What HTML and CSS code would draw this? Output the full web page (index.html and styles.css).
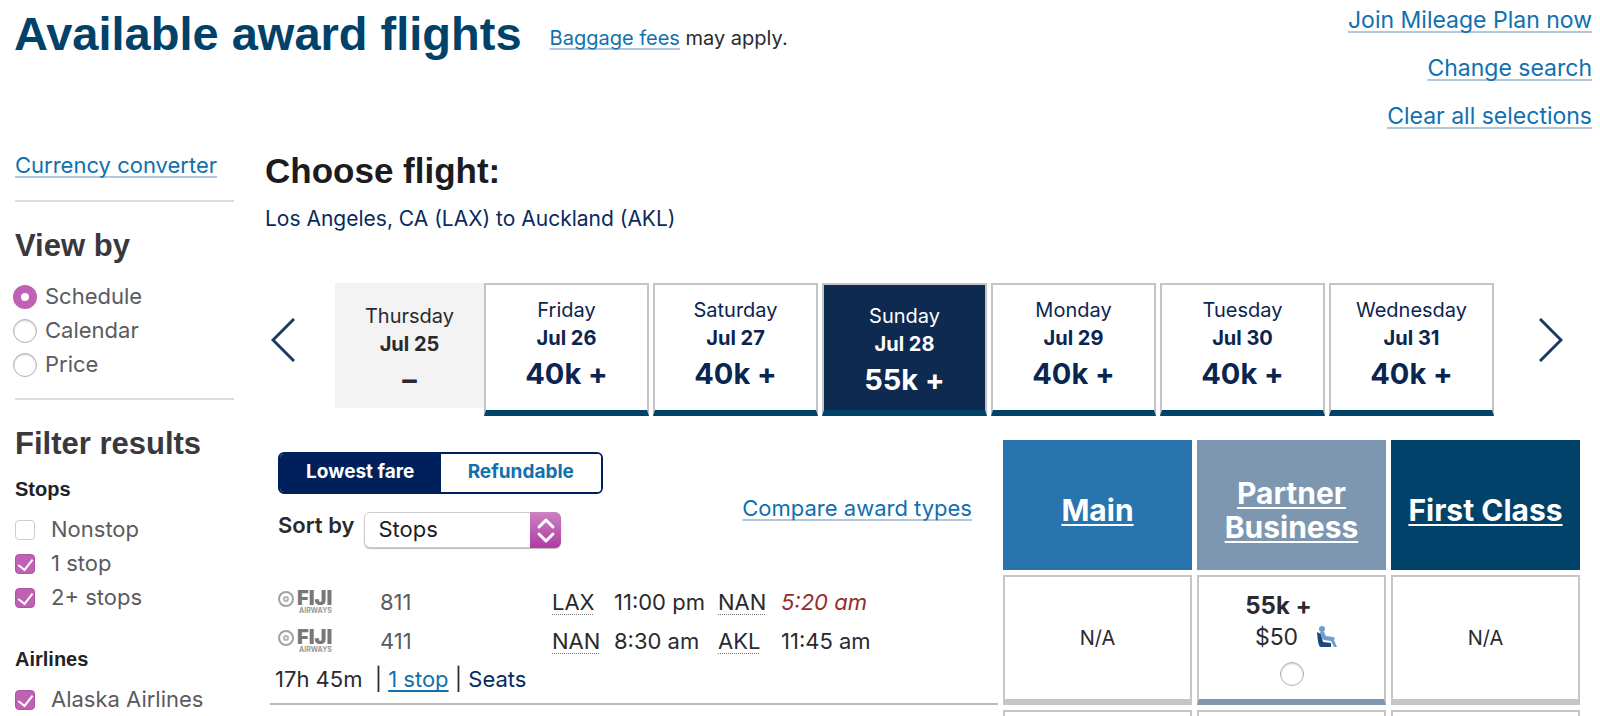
FILE: index.html
```html
<!DOCTYPE html>
<html lang="en">
<head>
  <meta charset="UTF-8">
  <meta name="viewport" content="width=device-width, initial-scale=1.0">
  <title>Available award flights</title>
  <link rel="stylesheet" href="styles.css">
</head>
<body>
  <header class="page-header">
    <h1>Available award flights</h1>
    <p class="fees"><a href="#">Baggage fees</a> may apply.</p>
    <nav class="top-links">
      <a href="#">Join Mileage Plan now</a>
      <a href="#">Change search</a>
      <a href="#">Clear all selections</a>
    </nav>
  </header>

  <div class="layout">
    <aside class="sidebar">
      <div class="converter"><a href="#">Currency converter</a></div>

      <section class="view-by">
        <h2>View by</h2>
        <label><input type="radio" name="view" checked><span>Schedule</span></label>
        <label><input type="radio" name="view"><span>Calendar</span></label>
        <label><input type="radio" name="view"><span>Price</span></label>
      </section>

      <section class="filters">
        <h2>Filter results</h2>
        <h3>Stops</h3>
        <label><input type="checkbox"><span>Nonstop</span></label>
        <label><input type="checkbox" checked><span>1 stop</span></label>
        <label><input type="checkbox" checked><span>2+ stops</span></label>
        <h3>Airlines</h3>
        <label><input type="checkbox" checked><span>Alaska Airlines</span></label>
      </section>
    </aside>

    <main>
      <h2 class="choose">Choose flight:</h2>
      <p class="route">Los Angeles, CA (LAX) to Auckland (AKL)</p>

      <div class="dates">
        <button class="arrow" aria-label="Previous dates">
          <svg width="24" height="44" viewBox="0 0 24 44"><path d="M23 1L2 22l21 21" fill="none" stroke="#1b3a63" stroke-width="3"/></svg>
        </button>
        <div class="days">
          <button class="day empty" disabled><span>Thursday</span><b>Jul 25</b><strong>–</strong></button>
          <button class="day"><span>Friday</span><b>Jul 26</b><strong>40k +</strong></button>
          <button class="day"><span>Saturday</span><b>Jul 27</b><strong>40k +</strong></button>
          <button class="day selected"><span>Sunday</span><b>Jul 28</b><strong>55k +</strong></button>
          <button class="day"><span>Monday</span><b>Jul 29</b><strong>40k +</strong></button>
          <button class="day"><span>Tuesday</span><b>Jul 30</b><strong>40k +</strong></button>
          <button class="day"><span>Wednesday</span><b>Jul 31</b><strong>40k +</strong></button>
        </div>
        <button class="arrow" aria-label="Next dates">
          <svg width="24" height="44" viewBox="0 0 24 44"><path d="M1 1l21 21L1 43" fill="none" stroke="#1b3a63" stroke-width="3"/></svg>
        </button>
      </div>

      <table class="flights">
        <thead>
          <tr>
            <td class="controls">
              <div class="controls-row">
                <div>
                  <div class="toggle">
                    <button class="on">Lowest fare</button>
                    <button>Refundable</button>
                  </div>
                  <div class="sort">
                    <label for="sort">Sort by</label>
                    <span class="select">
                      <select id="sort">
                        <option>Stops</option>
                        <option>Price</option>
                        <option>Duration</option>
                      </select>
                      <svg width="31" height="36" viewBox="0 0 31 36"><path d="M9 15l7-7 7 7M9 22l7 7 7-7" fill="none" stroke="#fff" stroke-width="3" stroke-linecap="round" stroke-linejoin="round"/></svg>
                    </span>
                  </div>
                </div>
                <a class="compare" href="#">Compare award types</a>
              </div>
            </td>
            <th class="fare-head main-cabin"><a href="#">Main</a></th>
            <th class="fare-head business"><a href="#">Partner Business</a></th>
            <th class="fare-head first"><a href="#">First Class</a></th>
          </tr>
        </thead>
        <tbody>
          <tr>
            <td class="info">
              <div class="leg">
                <svg class="logo" width="64" height="34" viewBox="0 0 64 34">
                  <circle cx="11" cy="14" r="7" fill="none" stroke="#a2a2a2" stroke-width="2"/>
                  <circle cx="11" cy="14" r="2" fill="none" stroke="#b5b5b5" stroke-width="2"/>
                  <text class="logo-name" x="22" y="20">FIJI</text>
                  <text class="logo-sub" x="24" y="28">AIRWAYS</text>
                </svg>
                <span class="number">811</span>
                <span><abbr>LAX</abbr></span><span>11:00 pm</span>
                <span><abbr>NAN</abbr></span><em>5:20 am</em>
              </div>
              <div class="leg">
                <svg class="logo" width="64" height="34" viewBox="0 0 64 34">
                  <circle cx="11" cy="14" r="7" fill="none" stroke="#a2a2a2" stroke-width="2"/>
                  <circle cx="11" cy="14" r="2" fill="none" stroke="#b5b5b5" stroke-width="2"/>
                  <text class="logo-name" x="22" y="20">FIJI</text>
                  <text class="logo-sub" x="24" y="28">AIRWAYS</text>
                </svg>
                <span class="number">411</span>
                <span><abbr>NAN</abbr></span><span>8:30 am</span>
                <span><abbr>AKL</abbr></span><span>11:45 am</span>
              </div>
              <div class="summary">
                <span class="duration">17h 45m</span> | <a href="#">1 stop</a> | <a class="seats" href="#">Seats</a>
              </div>
            </td>
            <td class="fare">N/A</td>
            <td class="fare available">
              <label>
                <span class="miles">55k +</span>
                <span class="price">$50
                  <svg width="22" height="22" viewBox="0 0 22 22">
                    <path d="M1 6l4 2 2 8 8 1v4H5c-2 0-3-3-4-15z" fill="#1d4877"/>
                    <circle cx="6" cy="3" r="3" fill="#6d9fcd"/>
                    <path d="M4 6h4l2 4 7 1 2 1-1 2 3 7h-3l-3-6-7-1c-2-1-3-4-4-8z" fill="#6d9fcd"/>
                  </svg>
                </span>
                <input type="radio" name="fare">
              </label>
            </td>
            <td class="fare">N/A</td>
          </tr>
          <tr>
            <td></td>
            <td class="fare"></td>
            <td class="fare"></td>
            <td class="fare"></td>
          </tr>
        </tbody>
      </table>
    </main>
  </div>
</body>
</html>
```
FILE: styles.css
```css
* {
  box-sizing: border-box;
}
html {
  overflow: hidden;
}
body {
  margin: 0;
  height: 100vh;
  overflow: hidden;
  background: #fff;
  color: #2a2a2e;
  font-family: Inter, "Liberation Sans", sans-serif;
  font-size: 22px;
  line-height: 28px;
}
h1, h2, h3, p {
  margin: 0;
}
h1, h2, h3 {
  font-family: "Liberation Sans", Arial, sans-serif;
}
button, select {
  font-family: inherit;
  cursor: pointer;
}
a {
  color: #1170ae;
  text-decoration: underline;
  text-decoration-color: #b3c6de;
  text-decoration-thickness: 2px;
  text-underline-offset: 3px;
  text-decoration-skip-ink: none;
}

/* header */
.page-header {
  display: flex;
  align-items: flex-start;
  padding: 6px 8px 0 14px;
}
h1 {
  color: #01426a;
  font-size: 47px;
  line-height: 56px;
}
.fees {
  margin: 18px 0 0 28px;
  font-size: 20px;
}
.top-links {
  display: flex;
  flex-direction: column;
  align-items: flex-end;
  gap: 20px;
  margin-left: auto;
  font-size: 23px;
}
.layout {
  display: flex;
  align-items: flex-start;
  padding-top: 21px;
}

/* sidebar */
.sidebar {
  flex: none;
  width: 219px;
  margin: 0 31px 0 15px;
  color: #5b5b5f;
  white-space: nowrap;
}
.sidebar h2 {
  color: #38383d;
  font-size: 31px;
  line-height: 36px;
}
.sidebar h3 {
  margin-bottom: 12px;
  color: #222226;
  font-size: 20px;
  line-height: 24px;
}
.sidebar label {
  display: flex;
  align-items: center;
  height: 34px;
}
.sidebar label span {
  padding-bottom: 3px;
}
.converter {
  padding-bottom: 21px;
  border-bottom: 2px solid #ddd;
}
.view-by {
  padding: 26px 0 16px;
  border-bottom: 2px solid #ddd;
}
.view-by h2 {
  margin-bottom: 16px;
}
.view-by label {
  margin-left: -2px;
}
.filters {
  padding-top: 26px;
}
.filters h2 {
  margin-bottom: 15px;
}
.filters label + h3 {
  margin-top: 32px;
}
input {
  flex: none;
  appearance: none;
  margin: 0;
  background: #fff;
}
input[type="radio"] {
  width: 24px;
  height: 24px;
  margin-right: 8px;
  border: 1px solid #b0b0b0;
  border-radius: 50%;
  box-shadow: inset 0 1px 2px #ccc;
}
input[type="radio"]:checked {
  border: 8px solid #bf62b3;
  box-shadow: none;
}
input[type="checkbox"] {
  display: grid;
  place-items: center;
  width: 20px;
  height: 20px;
  margin-right: 16px;
  border: 1px solid #ccc;
  border-radius: 4px;
}
input[type="checkbox"]:checked {
  border-color: #b053a6;
  background: #bf62b3;
}
input[type="checkbox"]:checked::after {
  content: "";
  width: 7px;
  height: 12px;
  margin-bottom: 3px;
  border: solid #fff;
  border-width: 0 2px 2px 0;
  transform: rotate(38deg);
}

/* date strip */
main {
  flex: 1;
  padding-right: 15px;
}
.choose {
  color: #1c1c1f;
  font-size: 35px;
  line-height: 40px;
}
.route {
  margin-top: 14px;
  color: #0a2a5e;
  font-size: 21px;
}
.dates {
  display: flex;
  align-items: center;
  justify-content: space-between;
  margin: 50px 22px 19px 6px;
}
.arrow {
  width: 24px;
  height: 44px;
  margin-bottom: 20px;
  padding: 0;
  border: 0;
  background: none;
}
.days {
  display: flex;
  flex: 1;
  gap: 4px;
  align-items: flex-start;
  margin: 0 45px 0 40px;
}
.day {
  display: flex;
  flex: 1;
  flex-direction: column;
  align-items: center;
  height: 133px;
  padding: 11px 0 0;
  border: 2px solid #c4c4c4;
  border-bottom: 6px solid #01426a;
  background: #fff;
  color: #0b2551;
  font-size: 20px;
  line-height: 28px;
}
.day strong {
  margin-top: 4px;
  font-size: 29px;
  line-height: 36px;
}
.day.empty {
  flex: 0 0 149px;
  height: 125px;
  margin-right: -4px;
  padding-top: 19px;
  border: 0;
  background: #f3f3f3;
  color: #2a2a2e;
}
.day.selected {
  padding-top: 17px;
  background: #0e2a50;
  color: #fff;
}

/* results */
.flights {
  width: 100%;
  border-spacing: 5px;
  table-layout: fixed;
}
.flights td, .flights th {
  padding: 0;
}
.flights .controls {
  vertical-align: top;
}
.controls-row {
  display: flex;
  justify-content: space-between;
  padding: 12px 26px 0 8px;
}
.toggle {
  display: flex;
  width: 325px;
  height: 42px;
  overflow: hidden;
  border: 2px solid #00205b;
  border-radius: 6px;
}
.toggle button {
  flex: 1;
  padding: 0 0 4px;
  border: 0;
  background: #fff;
  color: #1170ae;
  font-size: 19px;
  font-weight: 700;
}
.toggle .on {
  background: #00205b;
  color: #fff;
}
.sort {
  display: flex;
  gap: 10px;
  margin-top: 18px;
}
.sort label {
  line-height: 26px;
  font-weight: 600;
}
.select {
  position: relative;
  width: 197px;
  height: 36px;
}
.select select {
  appearance: none;
  width: 100%;
  height: 36px;
  padding: 0 0 2px 13px;
  border: 1px solid #ccc;
  border-radius: 6px;
  background: #fff;
  box-shadow: 0 1px 1px #bbb;
  color: #1c1c1f;
  font-size: 22px;
}
.select svg {
  position: absolute;
  top: 0;
  right: 0;
  border-radius: 0 6px 6px 0;
  background: linear-gradient(#cc83c3, #b03aa2);
  pointer-events: none;
}
.compare {
  margin-top: 42px;
}
.flights .fare-head {
  width: 189px;
  height: 130px;
  padding-top: 9px;
  color: #fff;
  font-size: 30px;
  line-height: 34px;
}
.fare-head a {
  color: #fff;
  text-decoration-color: #fff;
}
.main-cabin {
  background: #2774ae;
}
.business {
  background: #7d97b1;
}
.first {
  background: #01426a;
}
.flights .info {
  padding-top: 5px;
  vertical-align: top;
  border-bottom: 2px solid #bbb;
}
.leg {
  display: grid;
  grid-template-columns: 110px 172px 62px 104px 63px auto;
  align-items: center;
  justify-content: start;
  height: 39px;
  padding-top: 4px;
}
.leg .number {
  color: #5b5b5f;
}
.leg em {
  color: #962c2c;
}
.leg abbr {
  text-decoration: underline dotted #777;
  text-decoration-thickness: 1px;
  text-underline-offset: 4px;
}
.logo {
  margin-left: 5px;
}
.logo-name {
  fill: #777;
  font: 900 20px Inter, sans-serif;
}
.logo-sub {
  fill: #999;
  font: 700 7px Inter, sans-serif;
}
.summary {
  padding: 7px 0 0 5px;
}
.summary a {
  text-decoration-color: #1170ae;
}
.summary .duration {
  margin-right: 6px;
}
.summary .seats {
  color: #0a2a5e;
  text-decoration: none;
}
.fare {
  height: 130px;
  border: 2px solid #c6c7c5;
  border-bottom-width: 6px;
  text-align: center;
  font-size: 20px;
}
.fare.available {
  border-bottom-color: #7d97b1;
}
.fare label {
  display: flex;
  flex-direction: column;
  align-items: center;
}
.miles {
  margin-right: 26px;
  font-size: 24px;
  font-weight: 700;
  line-height: 30px;
}
.price {
  display: flex;
  gap: 18px;
  align-items: center;
  margin-left: 10px;
  font-size: 23px;
  line-height: 32px;
}
.fare input[type="radio"] {
  margin: 9px 0 0;
}
```
